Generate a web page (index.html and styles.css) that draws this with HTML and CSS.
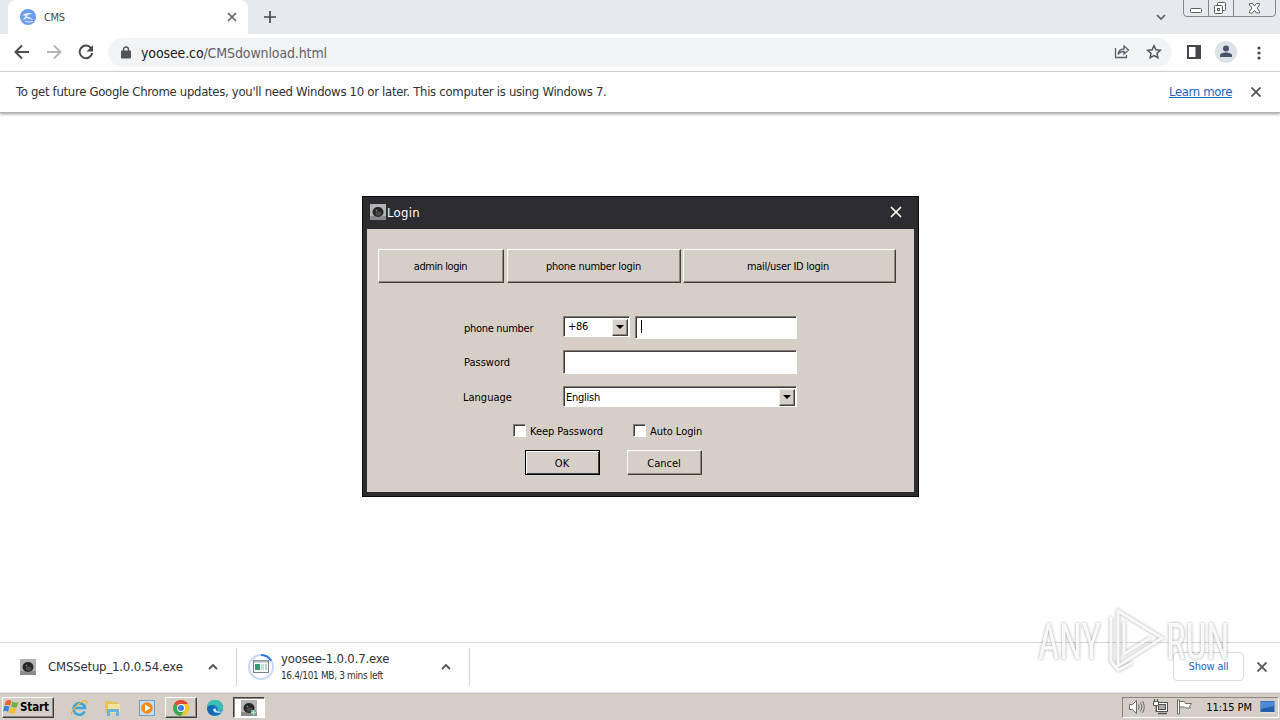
FILE: index.html
```html
<!DOCTYPE html>
<html lang="en">
  <head>
    <meta charset="utf-8" />
    <meta name="viewport" content="width=device-width, initial-scale=1.0" />
    <title>CMS</title>
    <link rel="stylesheet" href="styles.css">
  </head>

  <body>
    <header class="tabstrip">
      <div class="tab">
        <svg class="favicon" width="16" height="16" viewBox="0 0 16 16">
          <circle cx="8" cy="8" r="8" fill="#6c9cf0" />
          <path d="M2.500 6.500c3-3 7-3 10.500-1.500-3 0-5 .5-6.500 2.500 2 0 4 1 7 3.500-3-.5-5-1.500-7-2-1 1-2 1.500-4 1.500 1.500-1 2-2 3-3.500-1-.5-2-.5-3-.5z" fill="#e4eeff" />
          <path d="M5 12q4 2 8 .5" fill="none" stroke="#e4eeff" />
        </svg>
        <span class="tab-title">CMS</span>
        <svg width="10" height="10" viewBox="0 0 10 10"><path d="M1 1l8 8M9 1L1 9" stroke="#5f6368" stroke-width="1.7" /></svg>
      </div>
      <svg class="new-tab" width="12" height="12" viewBox="0 0 12 12"><path d="M6 0v12M0 6h12" stroke="#45484c" stroke-width="1.7" /></svg>
      <svg class="tab-search" width="10" height="7" viewBox="0 0 10 7"><path d="M1 1l4 4 4-4" fill="none" stroke="#5a5d61" stroke-width="1.7" /></svg>
      <svg class="win-buttons" width="94" height="18" viewBox="0 0 94 18">
        <path d="M.5 0v13q0 3.500 3.500 3.500h85q3.500 0 3.500-3.500V0M25.500 0v16M50.500 0v16" fill="none" stroke="#83878c" />
        <g fill="#fff" stroke="#5a5e64">
          <rect x="7.500" y="8.500" width="11" height="4" rx="1" />
          <rect x="34.500" y="2.500" width="8" height="8" rx="1" />
          <rect x="31.500" y="5.500" width="8" height="8" rx="1" />
          <rect x="34.500" y="8.500" width="2" height="2" />
          <path d="M66.500 3.500h3l2 2.500 2-2.500h3v1.500L74 8l2.500 3.500V13h-3l-2-2.500-2 2.500h-3v-1.500L69 8l-2.500-3z" />
        </g>
      </svg>
    </header>

    <nav class="toolbar">
      <svg class="nav-icon" width="16" height="16" viewBox="0 0 16 16"><path d="M15 8H2M8 1.500L1.500 8 8 14.500" fill="none" stroke="#4a4d51" stroke-width="2" /></svg>
      <svg class="nav-icon" width="16" height="16" viewBox="0 0 16 16"><path d="M1 8h13M8 1.500L14.500 8 8 14.500" fill="none" stroke="#b2b4b7" stroke-width="1.800" /></svg>
      <svg class="nav-icon" width="16" height="16" viewBox="0 0 16 16"><path d="M13.300 4.500A6.300 6.300 0 1 0 14.200 9" fill="none" stroke="#4a4d51" stroke-width="2" /><path d="M15 1v6.500H8.500z" fill="#4a4d51" /></svg>
      <div class="address">
        <svg width="10" height="13" viewBox="0 0 10 13"><path d="M2.500 6V3.500a2.500 2.500 0 0 1 5 0V6" fill="none" stroke="#505357" stroke-width="1.400" /><rect x="0" y="4.500" width="10" height="8" rx="1" fill="#505357" /></svg>
        <span class="url">yoosee.co<span class="path">/CMSdownload.html</span></span>
        <svg class="share" width="16" height="16" viewBox="0 0 16 16" fill="none" stroke="#5f6368" stroke-width="1.300"><path d="M1.500 4v9.500h11V11" /><path d="M4 10.500c.5-4 2.500-5.500 6-5.500V2l4.500 4-4.500 4V7.500C7.500 7.500 5.500 8 4 10.500z" /></svg>
        <svg width="16" height="16" viewBox="0 0 16 16"><path d="M8 1.800l1.900 4 4.400.5-3.300 3 .9 4.400L8 11.500l-3.900 2.200.9-4.400-3.300-3 4.400-.5z" fill="none" stroke="#505357" stroke-width="1.500" /></svg>
      </div>
      <svg class="side-panel" width="14" height="14" viewBox="0 0 14 14"><rect x="1" y="1" width="12" height="12" fill="#fff" stroke="#45484c" stroke-width="2" /><rect x="8.500" y="1" width="4.500" height="12" fill="#45484c" /></svg>
      <svg class="avatar" width="22" height="22" viewBox="0 0 22 22"><circle cx="11" cy="11" r="11" fill="#dde1e8" /><circle cx="11" cy="7.500" r="3" fill="#46536f" /><path d="M5 16v-1.500c0-2 3-3 6-3s6 1 6 3V16z" fill="#46536f" /></svg>
      <svg class="menu" width="4" height="14" viewBox="0 0 4 14" fill="#45484c"><circle cx="2" cy="2" r="1.600" /><circle cx="2" cy="7" r="1.600" /><circle cx="2" cy="12" r="1.600" /></svg>
    </nav>

    <div class="infobar">
      <span class="message">To get future Google Chrome updates, you'll need Windows 10 or later. This computer is using Windows 7.</span>
      <a class="learn-more" href="#">Learn more</a>
      <svg width="10" height="10" viewBox="0 0 10 10"><path d="M.500.500l9 9M9.500.500l-9 9" stroke="#505357" stroke-width="1.800" /></svg>
    </div>

    <main class="page"></main>

    <footer class="downloads">
      <div class="download first">
        <svg width="16" height="16" viewBox="0 0 16 16"><use href="#camera" /></svg>
        <span class="file">CMSSetup_1.0.0.54.exe</span>
        <svg class="chevron" width="10" height="7" viewBox="0 0 10 7"><path d="M1 6l4-4 4 4" fill="none" stroke="#505357" stroke-width="1.800" /></svg>
      </div>
      <div class="download second">
        <svg width="26" height="26" viewBox="0 0 26 26">
          <circle cx="13" cy="13" r="12" fill="none" stroke="#c6d8f5" stroke-width="2" />
          <path d="M13 1a12 12 0 0 1 10.200 5.700" fill="none" stroke="#2b75df" stroke-width="2" />
          <rect x="5.500" y="6.500" width="15" height="12" fill="#fff" stroke="#77808a" />
          <path d="M6 7.500h14" stroke="#a9b7c8" stroke-width="2" />
          <rect x="7" y="10" width="5" height="6" fill="#3b9a74" />
          <rect x="13" y="10" width="3" height="6" fill="#c5ddd5" />
          <path d="M18 10v6" stroke="#7d94b0" />
        </svg>
        <div class="details">
          <span class="file">yoosee-1.0.0.7.exe</span>
          <span class="progress">16.4/101 MB, 3 mins left</span>
        </div>
        <svg class="chevron" width="10" height="7" viewBox="0 0 10 7"><path d="M1 6l4-4 4 4" fill="none" stroke="#505357" stroke-width="1.800" /></svg>
      </div>
      <button class="show-all">Show all</button>
      <svg width="10" height="10" viewBox="0 0 10 10"><path d="M.500.500l9 9M9.500.500l-9 9" stroke="#505357" stroke-width="1.800" /></svg>
    </footer>

    <div class="taskbar">
      <button class="start">
        <svg width="17" height="15" viewBox="0 0 17 15">
          <path d="M3 2q3-2 5.500 0L7 7Q4.500 5 1.500 6.500z" fill="#e8642c" />
          <path d="M9.500 2.500q3 2 6 .5L14 8q-3 1.500-6-.5z" fill="#6fb23e" />
          <path d="M1 7.500q3-1.500 5.500.5L5 13q-2.500-2-5-.5z" fill="#3d87d3" />
          <path d="M7.500 8.500q3 2 6 .5L12 14q-3 1.500-6-.5z" fill="#f5bc2c" />
        </svg>
        Start
      </button>
      <div class="pinned">
        <svg width="18" height="18" viewBox="0 0 18 18">
          <path d="M14.500 12.500a5.800 5.800 0 1 1 .5-3.500H5" fill="none" stroke="#39a4dd" stroke-width="2.600" />
          <path d="M2 15.500C-1 13 12 0 16.500 2c1 .8.500 2-.5 3.500" fill="none" stroke="#e5b93a" stroke-width="1.300" />
        </svg>
        <svg width="18" height="18" viewBox="0 0 18 18">
          <path d="M1 2h5l1 1h7v11H1z" fill="#e3c25c" />
          <path d="M4 5h12v9H4z" fill="#f5e298" />
          <path d="M3 17v-6q0-1 1-1h10q1 0 1 1v6h-3v-4H6v4z" fill="#68b2db" />
        </svg>
        <svg width="18" height="18" viewBox="0 0 18 18">
          <rect x="1.500" y="1.500" width="15" height="15" fill="#c7dff1" stroke="#6b9dcc" />
          <circle cx="9" cy="9" r="5.800" fill="#f08a1d" />
          <path d="M7 5.500v7L12.500 9z" fill="#fff" />
        </svg>
      </div>
      <div class="task">
        <svg width="16" height="16" viewBox="0 0 16 16">
          <circle cx="8" cy="8" r="8" fill="#f5c52c" />
          <path d="M8 8L1.100 4A8 8 0 0 1 14.900 4z" fill="#df4936" />
          <path d="M1.100 4A8 8 0 0 0 8 16l3.500-6L8 8z" fill="#3ba657" />
          <path d="M8 4h6.900A8 8 0 0 1 8 16l3.500-6z" fill="#f5c52c" />
          <circle cx="8" cy="8" r="4" fill="#fff" /><circle cx="8" cy="8" r="3" fill="#3b7de0" />
        </svg>
      </div>
      <svg class="edge" width="16" height="16" viewBox="0 0 16 16">
        <circle cx="8" cy="8" r="8" fill="#1478c8" />
        <path d="M0 8A8 8 0 0 1 16 7.500c0 3-3 4-6 3 2-2 0-5-3-5S1 6 0 8z" fill="#3bc0b4" />
        <path d="M6 9c0 3 3 4.500 8 3.500l1.500-1C11 12 8 11 9 8.500z" fill="#d6e9f2" />
        <path d="M0 8c1-3 6-4 8-2-3 1-4 6 0 9.500C3 16 0 12 0 8z" fill="#1766b5" />
      </svg>
      <div class="task active">
        <svg width="16" height="16" viewBox="0 0 16 16"><use href="#camera" /><path d="M10 10h5v5h-5z" fill="#72b08a" /><path d="M12.500 10v5M10 12.500h5" stroke="#c5dccd" /></svg>
      </div>
      <div class="tray">
        <svg width="17" height="16" viewBox="0 0 17 16" fill="none" stroke="#6c6a68"><path d="M1.500 5.500h3l4-4v13l-4-4h-3z" fill="#fff" /><path d="M10.500 5.500q1.500 2.500 0 5M12.500 3.500q3 4.500 0 9M14.500 2q3.500 6 0 12" /></svg>
        <svg width="17" height="16" viewBox="0 0 17 16" stroke="#565452"><rect x="4.500" y="3.500" width="11" height="9" fill="#fff" /><rect x="6.500" y="5.500" width="7" height="5" fill="#aaa8a5" /><path d="M6 14.500h9" stroke-width="1.500" /><path d="M1.500 2.500h5v4h-5zM2.500 0v3M5.500 0v3M4 7v6" fill="#fff" /></svg>
        <svg width="17" height="16" viewBox="0 0 17 16" stroke="#6c6a68"><path d="M1.500 1v14h2V1zM3.500 2.500h5l1 2h6l-2 3 1 1.500h-5l-1-1h-5z" fill="#fff" /></svg>
        <span class="clock">11:15 PM</span>
        <svg width="16" height="14" viewBox="0 0 16 14"><rect x=".5" y="1" width="14" height="11" fill="#245cac" /><path d="M1 1.500h13V6L1 9z" fill="#4d8ad5" /><path d="M1 12.500h14" stroke="#d7e2ef" /></svg>
      </div>
    </div>

    <section class="dialog">
      <div class="titlebar">
        <svg width="16" height="16" viewBox="0 0 16 16">
          <g id="camera">
            <rect width="16" height="16" fill="#b4b4b4" />
            <path d="M0 12h16v4H0z" fill="#8b8b8b" />
            <ellipse cx="8" cy="8" rx="5.500" ry="5" fill="#262626" />
            <ellipse cx="8.500" cy="9.500" rx="3" ry="2.300" fill="#484b4c" />
            <circle cx="6.500" cy="6.500" r=".8" fill="#8e9696" />
          </g>
        </svg>
        <h1>Login</h1>
        <svg class="close" width="12" height="12" viewBox="0 0 12 12"><path d="M1 1l10 10M11 1L1 11" stroke="#fff" stroke-width="1.700" /></svg>
      </div>
      <div class="dialog-body">
        <div class="modes">
          <button class="btn admin">admin login</button>
          <button class="btn">phone number login</button>
          <button class="btn mail">mail/user ID login</button>
        </div>
        <form class="form">
          <div class="row phone">
            <label class="tight">phone number</label>
            <div class="select code"><span>+86</span><i class="arrow"></i></div>
            <div class="field number"><i class="caret"></i></div>
          </div>
          <div class="row password">
            <label>Password</label>
            <div class="field"></div>
          </div>
          <div class="row language">
            <label>Language</label>
            <div class="select"><span>English</span><i class="arrow"></i></div>
          </div>
          <div class="checks">
            <label class="check"><i class="box"></i><span>Keep Password</span></label>
            <label class="check"><i class="box"></i><span>Auto Login</span></label>
          </div>
          <div class="actions">
            <button type="button" class="btn ok">OK</button>
            <button type="button" class="btn">Cancel</button>
          </div>
        </form>
      </div>
    </section>

    <svg class="watermark" width="204" height="74" viewBox="0 0 204 74">
      <g class="mark-text">
        <text transform="translate(4 57) scale(.74 1)">ANY</text>
        <text transform="translate(132 57) scale(.74 1)">RUN</text>
      </g>
      <g class="mark-line">
        <path d="M84 9l44 27-44 28zM77 15v44l7 9 14-7M90 20v32l26-16" />
      </g>
    </svg>
  </body>
</html>
```
FILE: styles.css
```css
* {
  box-sizing: border-box;
}

body {
  margin: 0;
  width: 1280px;
  height: 720px;
  overflow: hidden;
  display: flex;
  flex-direction: column;
  background-color: white;
  color: #303134;
  font-family: "DejaVu Sans Condensed", "DejaVu Sans", sans-serif;
  font-stretch: condensed;
  font-size: 11px;
  white-space: nowrap;
}

svg {
  display: block;
  flex: none;
}

button {
  font: inherit;
  letter-spacing: inherit;
  padding: 0;
}

/* browser */
.tabstrip {
  height: 34px;
  flex: none;
  display: flex;
  background-color: #e7eaed;
}

.tab {
  width: 240px;
  margin-left: 8px;
  padding: 0 11px 0 12px;
  display: flex;
  align-items: center;
  background-color: white;
  border-radius: 8px 8px 0 0;
}

.tab-title {
  flex: 1;
  padding-left: 8px;
  letter-spacing: -0.3px;
  color: #45484c;
}

.new-tab {
  margin: 11px 0 0 16px;
}

.tab-search {
  margin: 14px 17px 0 auto;
}

.win-buttons {
  margin-right: 3px;
}

.toolbar {
  height: 38px;
  flex: none;
  display: flex;
  align-items: center;
  padding: 0 19px 0 14px;
  border-bottom: 1px solid #d9dadc;
}

.nav-icon {
  margin: -1px 16px 0 0;
}

.address {
  width: 1064px;
  height: 29px;
  margin-left: -2px;
  padding: 0 10px 1px 13px;
  display: flex;
  align-items: center;
  border-radius: 15px;
  background-color: #f1f3f4;
}

.url {
  flex: 1;
  margin-left: 10px;
  padding-top: 1px;
  font-size: 14px;
  letter-spacing: -0.12px;
  color: #202124;
}

.path {
  color: #5f6368;
}

.share {
  margin-right: 16px;
}

.side-panel {
  margin: -1px 0 0 15px;
}

.avatar {
  margin: -1px auto 0 14px;
}

.infobar {
  height: 41px;
  flex: none;
  display: flex;
  align-items: center;
  padding: 0 19px 0 16px;
  font-size: 13px;
  letter-spacing: -0.3px;
  border-bottom: 1px solid #b0b0b0;
  box-shadow: 0 1px 3px #999;
}

.message,
.learn-more {
  padding-bottom: 2px;
}

.learn-more {
  margin: 0 19px 0 auto;
  color: #1a66c2;
  letter-spacing: -0.36px;
}

.page {
  flex: 1;
}

/* download shelf */
.downloads {
  height: 51px;
  flex: none;
  display: flex;
  align-items: center;
  padding: 0 13px 2px 0;
  border-top: 1px solid #d5d7d9;
  border-bottom: 1px solid #e3e3e3;
}

.download {
  height: 38px;
  display: flex;
  align-items: center;
  border-right: 1px solid #d5d7d9;
}

.first {
  width: 237px;
  padding: 0 18px 0 20px;
}

.second {
  width: 233px;
  padding: 0 18px 0 11px;
}

.first .file {
  margin-left: 12px;
}

.file {
  font-size: 13px;
  letter-spacing: -0.17px;
}

.details {
  display: flex;
  flex-direction: column;
  gap: 3px;
  margin-left: 7px;
}

.details .file {
  line-height: 15px;
}

.progress {
  font-size: 10px;
  line-height: 13px;
  letter-spacing: -0.35px;
}

.chevron {
  margin-left: auto;
}

.show-all {
  width: 71px;
  height: 29px;
  margin: 0 13px 0 auto;
  padding-bottom: 1px;
  color: #1a66c2;
  letter-spacing: -0.2px;
  background-color: white;
  border: 1px solid #dadce0;
  border-radius: 4px;
}

/* windows taskbar */
.taskbar {
  height: 27px;
  flex: none;
  display: flex;
  padding: 3px 1px 2px 2px;
  background-color: #d5cec7;
  border-top: 1px solid #c9c5c0;
  color: black;
}

.start,
.task {
  display: flex;
  align-items: center;
  background-color: #d5cec7;
  border: 1px solid;
  border-color: #fff #404040 #404040 #fff;
  box-shadow: inset -1px -1px #8b8680;
}

.start {
  width: 52px;
  padding-bottom: 2px;
  font-size: 11.5px;
  font-weight: bold;
  letter-spacing: -0.1px;
}

.pinned {
  display: flex;
  align-items: center;
  gap: 16px;
  margin: 0 9px 0 16px;
}

.task {
  width: 32px;
  justify-content: center;
}

.edge {
  margin: 3px 10px 0;
}

.active {
  background-color: white;
  border-color: #404040 #fff #fff #404040;
  box-shadow: inset 1px 1px #8b8680;
}

.tray {
  display: flex;
  align-items: center;
  gap: 7px;
  margin-left: auto;
  padding: 0 2px 1px 5px;
  border: 1px solid;
  border-color: #8b8680 #fff #fff #8b8680;
}

.clock {
  margin: 0 1px 0 6px;
  letter-spacing: -0.05px;
}

/* login window */
.dialog {
  position: absolute;
  left: 362px;
  top: 196px;
  width: 557px;
  height: 301px;
  padding: 0 4px 4px;
  display: flex;
  flex-direction: column;
  background-color: #2d2c30;
  border: 1px solid #0c0c0c;
  color: black;
}

.titlebar {
  height: 32px;
  display: flex;
  align-items: center;
  padding: 0 12px 2px 3px;
  color: white;
}

.titlebar h1 {
  margin: 1px 0 0 1px;
  font-size: 13px;
  font-weight: normal;
  letter-spacing: 0.3px;
}

.close {
  margin-left: auto;
}

.dialog-body {
  flex: 1;
  padding: 20px 0 0 11px;
  background-color: #d5cfc8;
}

.btn {
  height: 25px;
  width: 75px;
  background-color: #d5cfc8;
  border: 1px solid;
  border-color: #fff #404040 #404040 #fff;
  box-shadow: inset -1px -1px #8b8680;
}

.modes {
  display: grid;
  grid-template-columns: 126px 174px 212px;
  column-gap: 3px;
  letter-spacing: -0.27px;
}

.modes .btn {
  width: auto;
  height: 34px;
  padding-right: 1px;
}

.modes .admin {
  letter-spacing: -0.45px;
}

.modes .mail {
  margin-left: -1px;
  padding-right: 3px;
}

.form {
  margin: 33px 0 0 85px;
  width: 334px;
}

.row {
  display: flex;
  align-items: flex-start;
}

.row label {
  width: 100px;
  padding: 6px 0 0 1px;
  line-height: 14px;
}

.row .tight {
  letter-spacing: -0.3px;
}

.field,
.select {
  flex: 1;
  height: 24px;
  background-color: white;
  border: 1px solid;
  border-color: #807b76 #fff #fff #807b76;
  box-shadow: inset 1px 1px #404040;
}

.select {
  height: 21px;
  padding: 2px 1px 1px 2px;
  display: flex;
  align-items: center;
  justify-content: space-between;
  letter-spacing: -0.25px;
}

.code {
  flex: none;
  width: 67px;
  margin-right: 5px;
  padding-left: 4px;
}

.code span {
  padding-bottom: 2px;
}

.number {
  height: 23px;
  padding: 3px 0 0 5px;
}

.caret {
  display: block;
  width: 1px;
  height: 13px;
  background-color: black;
}

.arrow {
  width: 16px;
  height: 17px;
  display: flex;
  align-items: center;
  justify-content: center;
  background-color: #d5cfc8;
  border: 1px solid;
  border-color: #eee #404040 #404040 #eee;
  box-shadow: inset -1px -1px #8b8680;
}

.arrow::before {
  content: "";
  border: 4px solid transparent;
  border-top-color: black;
  border-bottom: none;
}

.password {
  margin-top: 11px;
}

.language {
  margin-top: 12px;
}

.language label {
  padding: 5px 0 0;
}

.checks {
  display: flex;
  margin: 16px 0 0 50px;
}

.check {
  width: 120px;
  display: flex;
  align-items: center;
  gap: 4px;
  line-height: 14px;
  letter-spacing: -0.05px;
}

.check span {
  padding-top: 2px;
}

.box {
  width: 13px;
  height: 13px;
  margin-top: -1px;
  background-color: white;
  border: 1px solid;
  border-color: #807b76 #fff #fff #807b76;
  box-shadow: inset 1px 1px #404040;
}

.actions {
  display: flex;
  gap: 27px;
  margin: 11px 0 0 62px;
}

.actions .btn {
  padding: 2px 1px 0 0;
}

.ok {
  border-color: black;
  box-shadow: inset 1px 1px #fff, inset -1px -1px #404040;
}

/* overlay logo */
.watermark {
  position: absolute;
  left: 1034px;
  top: 602px;
  overflow: visible;
  pointer-events: none;
  filter: drop-shadow(0 0 1.5px rgba(0, 0, 0, 0.4));
}

.mark-text {
  font-family: Roboto, sans-serif;
  font-size: 50px;
  fill: rgba(255, 255, 255, 0.9);
}

.mark-line {
  fill: none;
  stroke: rgba(255, 255, 255, 0.9);
  stroke-width: 3px;
}
```
